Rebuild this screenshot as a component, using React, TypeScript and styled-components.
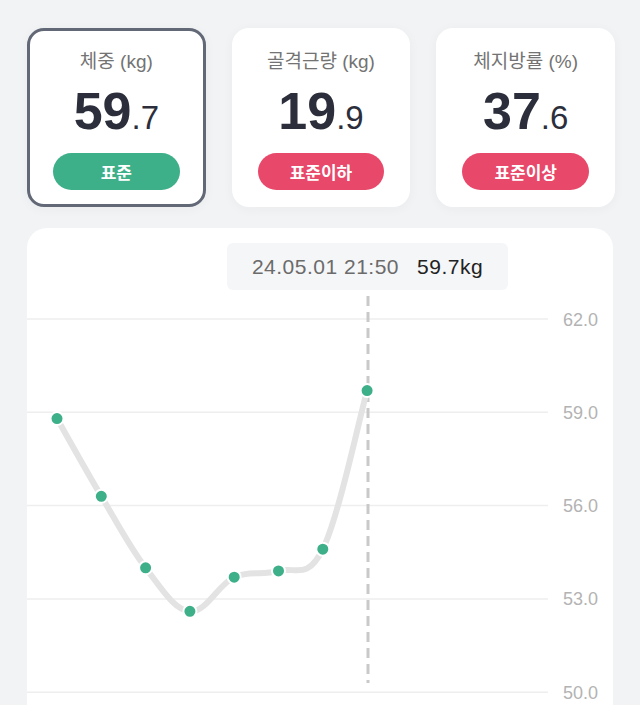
import React from "react";
import styled, { createGlobalStyle } from "styled-components";

const GlobalStyle = createGlobalStyle`
  html, body {
    margin: 0;
    padding: 0;
    background: #f2f3f5;
    font-family: "Liberation Sans", "Noto Sans CJK KR", sans-serif;
  }
  * {
    box-sizing: border-box;
  }
`;

const Page = styled.div`
  padding: 28px 25px 0 27px;
  height: 705px;
  overflow: hidden;
`;

const SummaryRow = styled.div`
  display: grid;
  grid-template-columns: repeat(3, 1fr);
  gap: 26px;
`;

interface CardProps {
  selected?: boolean;
}

const StatCard = styled.div<CardProps>`
  display: flex;
  flex-direction: column;
  align-items: center;
  height: 179px;
  padding: 19px 23px 14px;
  background: #fff;
  border-radius: 17px;
  border: 3px solid ${({ selected }) => (selected ? "#626876" : "transparent")};
  box-shadow: 0 2px 12px rgba(30, 40, 60, 0.04);
`;

const StatTitle = styled.div`
  font-size: 19px;
  line-height: 24px;
  color: #737373;
  white-space: nowrap;
`;

const StatValue = styled.div`
  margin-top: 13px;
  height: 48px;
  line-height: 48px;
  color: #2c2f3b;
  white-space: nowrap;
  b {
    font-size: 52px;
    font-weight: 700;
  }
  span {
    font-size: 33px;
    font-weight: 400;
  }
`;

interface BadgeProps {
  tone: "good" | "bad";
}

const Badge = styled.div<BadgeProps>`
  margin-top: 18px;
  width: 100%;
  height: 37px;
  border-radius: 19px;
  background: ${({ tone }) => (tone === "good" ? "#3daf89" : "#e8486a")};
  color: #fff;
  font-family: "Noto Sans CJK KR", sans-serif;
  font-size: 17px;
  font-weight: 700;
  display: flex;
  align-items: center;
  justify-content: center;
`;

const ChartCard = styled.div`
  position: relative;
  margin-top: 21px;
  margin-right: 2px;
  height: 520px;
  background: #fff;
  border-radius: 20px;
  overflow: hidden;
`;

const Tooltip = styled.div`
  position: absolute;
  top: 15px;
  left: 200px;
  width: 281px;
  height: 47px;
  border-radius: 6px;
  background: #f5f6f8;
  display: flex;
  align-items: center;
  justify-content: center;
  gap: 18px;
  font-size: 21px;
  letter-spacing: 0.5px;
`;

const TipDate = styled.span`
  color: #6b6b6b;
`;

const TipValue = styled.span`
  color: #222;
`;

const ChartSvg = styled.svg`
  display: block;
`;

const stats = [
  { title: "체중 (kg)", whole: "59", dec: ".7", label: "표준", tone: "good" as const, selected: true },
  { title: "골격근량 (kg)", whole: "19", dec: ".9", label: "표준이하", tone: "bad" as const },
  { title: "체지방률 (%)", whole: "37", dec: ".6", label: "표준이상", tone: "bad" as const },
];

const values = [58.8, 56.3, 54.0, 52.6, 53.7, 53.9, 54.6, 59.7];
const ticks = [62, 59, 56, 53, 50];
const TOP = 91;
const UNIT = 31.1;
const yOf = (v: number) => TOP + (62 - v) * UNIT;
const xOf = (i: number) => 30 + i * 44.3;

function smoothPath(pts: [number, number][]) {
  let d = `M${pts[0][0]},${pts[0][1]}`;
  for (let i = 0; i < pts.length - 1; i++) {
    const p0 = pts[i - 1] || pts[i];
    const p1 = pts[i];
    const p2 = pts[i + 1];
    const p3 = pts[i + 2] || p2;
    const t = 0.18;
    const c1x = p1[0] + (p2[0] - p0[0]) * t;
    const c1y = p1[1] + (p2[1] - p0[1]) * t;
    const c2x = p2[0] - (p3[0] - p1[0]) * t;
    const c2y = p2[1] - (p3[1] - p1[1]) * t;
    d += ` C${c1x},${c1y} ${c2x},${c2y} ${p2[0]},${p2[1]}`;
  }
  return d;
}

export default function App() {
  const pts = values.map((v, i) => [xOf(i), yOf(v)] as [number, number]);
  const activeX = 341;

  return (
    <Page>
      <GlobalStyle />
      <SummaryRow>
        {stats.map((s) => (
          <StatCard key={s.title} selected={s.selected}>
            <StatTitle>{s.title}</StatTitle>
            <StatValue>
              <b>{s.whole}</b>
              <span>{s.dec}</span>
            </StatValue>
            <Badge tone={s.tone}>{s.label}</Badge>
          </StatCard>
        ))}
      </SummaryRow>

      <ChartCard>
        <Tooltip>
          <TipDate>24.05.01 21:50</TipDate>
          <TipValue>59.7kg</TipValue>
        </Tooltip>
        <ChartSvg width="586" height="520" viewBox="0 0 586 520">
          {ticks.map((t) => (
            <g key={t}>
              <line x1="0" x2="521" y1={yOf(t)} y2={yOf(t)} stroke="#eeeeee" strokeWidth="1.5" />
              <text
                x="571"
                y={yOf(t) + 6.5}
                textAnchor="end"
                fontSize="18"
                fill="#b3b3b3"
                fontFamily="Liberation Sans, sans-serif"
              >
                {t.toFixed(1)}
              </text>
            </g>
          ))}
          <line
            x1={activeX}
            x2={activeX}
            y1="68"
            y2="455"
            stroke="#c9c9c9"
            strokeWidth="3"
            strokeDasharray="10 6"
          />
          <path d={smoothPath(pts)} fill="none" stroke="#e3e3e3" strokeWidth="6" strokeLinecap="round" />
          {pts.map(([x, y], i) => (
            <circle key={i} cx={x} cy={y} r="6.5" fill="#3daf89" stroke="#fff" strokeWidth="2" />
          ))}
          <text x={activeX - 22} y="490" fontSize="16" fill="#c4c4c4" fontFamily="Liberation Sans, sans-serif">
            05.01
          </text>
        </ChartSvg>
      </ChartCard>
    </Page>
  );
}
